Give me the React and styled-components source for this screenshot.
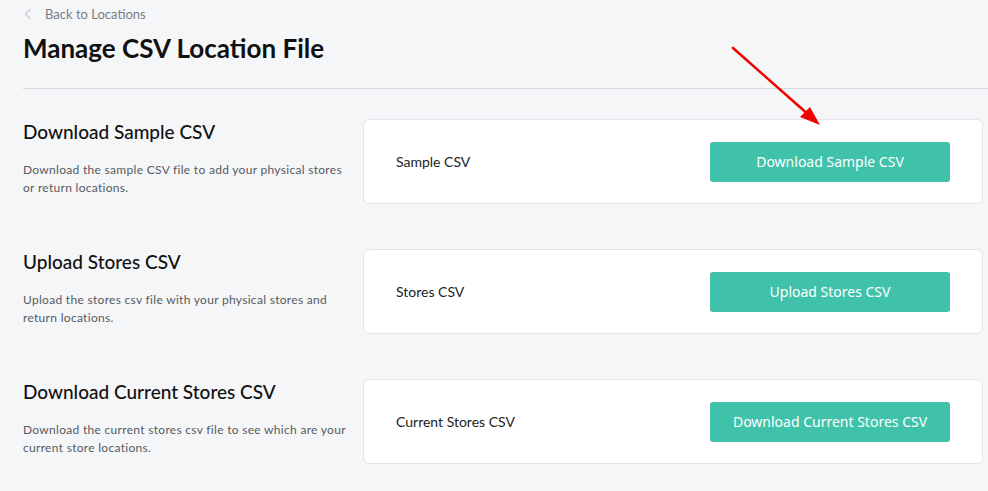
import React from 'react';
import styled, { createGlobalStyle } from 'styled-components';

const sections = [
	{
		title: 'Download Sample CSV',
		text: 'Download the sample CSV file to add your physical stores or return locations.',
		label: 'Sample CSV',
		action: 'Download Sample CSV',
	},
	{
		title: 'Upload Stores CSV',
		text: 'Upload the stores csv file with your physical stores and return locations.',
		label: 'Stores CSV',
		action: 'Upload Stores CSV',
	},
	{
		title: 'Download Current Stores CSV',
		text: 'Download the current stores csv file to see which are your current store locations.',
		label: 'Current Stores CSV',
		action: 'Download Current Stores CSV',
	},
];

export default function App() {
	return (
		<Page>
			<GlobalStyle />
			<BackLink>
				<svg width="8" height="12" viewBox="0 0 8 12">
					<path d="M6.5 1 L1.5 6 L6.5 11" fill="none" stroke="#c9cdd3" strokeWidth="1.4" />
				</svg>
				Back to Locations
			</BackLink>
			<Title>Manage CSV Location File</Title>
			<Divider />
			{sections.map((s) => (
				<Section key={s.title}>
					<Info>
						<SectionTitle>{s.title}</SectionTitle>
						<SectionText>{s.text}</SectionText>
					</Info>
					<Card>
						<CardLabel>{s.label}</CardLabel>
						<ActionButton>{s.action}</ActionButton>
					</Card>
				</Section>
			))}
			<Arrow width="100" height="90" viewBox="0 0 100 90">
				<line x1="3" y1="3" x2="80" y2="71" stroke="#f20000" strokeWidth="2.6" strokeLinecap="round" />
				<polygon points="90,80 70,72 80,62" fill="#f20000" />
			</Arrow>
		</Page>
	);
}

const GlobalStyle = createGlobalStyle`
	body {
		margin: 0;
		background: #f5f6f8;
		font-family: 'Lato', 'Open Sans', sans-serif;
	}
`;

const Page = styled.div`
	position: relative;
	padding: 5px 5px 0 23px;
	min-height: 491px;
	box-sizing: border-box;
`;

const BackLink = styled.div`
	display: flex;
	align-items: center;
	gap: 13px;
	font-size: 13px;
	color: #7a7d82;
	height: 18px;
	padding-left: 1px;
`;

const Title = styled.h1`
	margin: 10px 0 0;
	font-size: 26px;
	font-weight: 700;
	color: #111;
	line-height: 30px;
`;

const Divider = styled.div`
	height: 1px;
	background: #d6d9de;
	margin: 25px -5px 30px 0;
`;

const Section = styled.div`
	display: flex;
	align-items: flex-start;
	margin-bottom: 45px;
`;

const Info = styled.div`
	width: 340px;
	flex-shrink: 0;
	padding-right: 15px;
	box-sizing: border-box;
`;

const SectionTitle = styled.h2`
	margin: 1px 0 0;
	font-size: 19px;
	font-weight: 500;
	color: #111;
	line-height: 24px;
`;

const SectionText = styled.p`
	margin: 17px 0 0;
	font-size: 12px;
	line-height: 17.5px;
	letter-spacing: 0.3px;
	color: #555a60;
`;

const Card = styled.div`
	flex: 1;
	height: 85px;
	box-sizing: border-box;
	display: flex;
	align-items: center;
	justify-content: space-between;
	padding: 0 32px 0 32px;
	background: #fff;
	border: 1px solid #e2e5ea;
	border-radius: 6px;
`;

const CardLabel = styled.span`
	font-size: 14px;
	color: #222;
`;

const ActionButton = styled.button`
	width: 240px;
	height: 40px;
	border: none;
	border-radius: 3px;
	background: #40c2aa;
	color: #fff;
	font-family: 'Noto Sans', sans-serif;
	font-size: 14px;
	cursor: pointer;
`;

const Arrow = styled.svg`
	position: absolute;
	left: 730px;
	top: 45px;
`;
